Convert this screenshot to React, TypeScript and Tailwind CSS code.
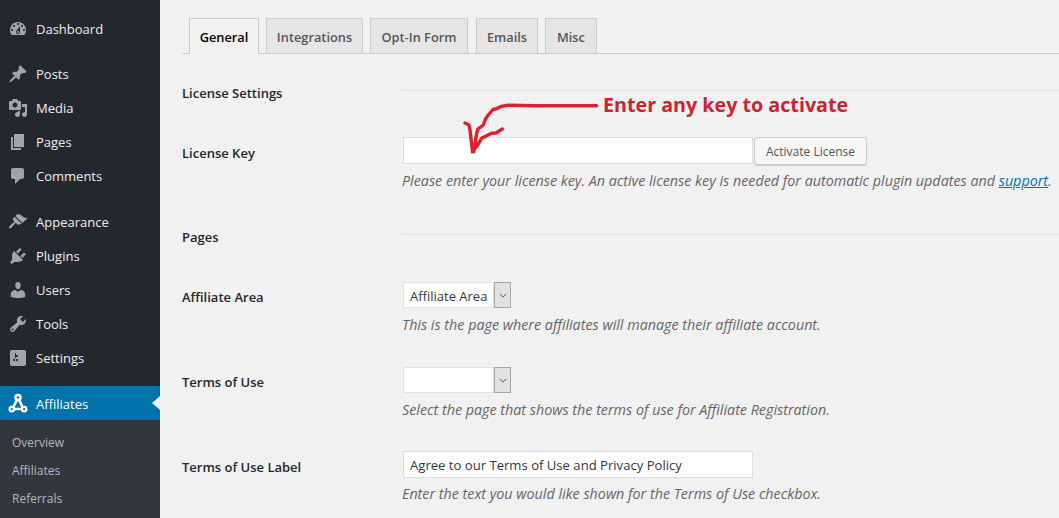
import React from 'react';

const ICONS: Record<string, string> = {
  dashboard: 'M3.76 16h12.48c1.1-1.37 1.76-3.11 1.76-5 0-4.42-3.58-8-8-8s-8 3.58-8 8c0 1.89.66 3.63 1.76 5zM10 4c.55 0 1 .45 1 1s-.45 1-1 1-1-.45-1-1 .45-1 1-1zM6 6c.55 0 1 .45 1 1s-.45 1-1 1-1-.45-1-1 .45-1 1-1zm8 0c.55 0 1 .45 1 1s-.45 1-1 1-1-.45-1-1 .45-1 1-1zm-5.37 5.55L12 7v6c0 1.1-.9 2-2 2s-2-.9-2-2c0-.57.24-1.08.63-1.45zM4 10c.55 0 1 .45 1 1s-.45 1-1 1-1-.45-1-1 .45-1 1-1zm12 0c.55 0 1 .45 1 1s-.45 1-1 1-1-.45-1-1 .45-1 1-1zm-5 3c0-.55-.45-1-1-1s-1 .45-1 1 .45 1 1 1 1-.45 1-1z',
  posts: 'M10.44 3.02l1.82-1.82 6.36 6.35-1.83 1.82c-1.05-.68-2.48-.57-3.41.36l-.75.75c-.92.93-1.04 2.35-.35 3.41l-1.83 1.82-2.41-2.41-2.8 2.79c-.42.42-3.38 2.71-3.8 2.29s1.86-3.39 2.28-3.81l2.79-2.79L4.1 9.36l1.83-1.82c1.05.69 2.48.57 3.4-.36l.75-.75c.93-.92 1.05-2.35.36-3.41z',
  media: 'M13 11V4c0-.55-.45-1-1-1h-1.67L9 1H5L3.67 3H2c-.55 0-1 .45-1 1v7c0 .55.45 1 1 1h10c.55 0 1-.45 1-1zM7 4.5c1.38 0 2.5 1.12 2.5 2.5S8.38 9.5 7 9.5 4.5 8.38 4.5 7 5.62 4.5 7 4.5zM14 6h5v10.5c0 1.38-1.12 2.5-2.5 2.5S14 17.88 14 16.5s1.12-2.5 2.5-2.5c.17 0 .34.02.5.05V9h-3V6zm-4 8.05V13h2v3.5c0 1.38-1.12 2.5-2.5 2.5S7 17.88 7 16.5 8.12 14 9.5 14c.17 0 .34.02.5.05z',
  pages: 'M6 15V2h10v13H6zm-1 1h8v2H3V5h2v11z',
  comments: 'M5 2h9c1.1 0 2 .9 2 2v7c0 1.1-.9 2-2 2h-2l-5 5v-5H5c-1.1 0-2-.9-2-2V4c0-1.1.9-2 2-2z',
  appearance: 'M14.48 11.06L7.41 3.99l1.5-1.5c.5-.56 2.3-.47 3.51.32 1.21.8 1.43 1.28 2.91 2.1 1.18.64 2.45 1.26 4.45.85zm-.71.71L6.7 4.7 4.93 6.47c-.39.39-.39 1.02 0 1.41l1.06 1.06c.39.39.39 1.03 0 1.42-.6.6-1.43 1.11-2.21 1.69-.35.26-.7.53-1.01.84-1.34 1.33-2.37 2.5-1.57 3.3.8.79 1.97-.23 3.3-1.57.31-.31.58-.66.84-1.01.58-.78 1.09-1.61 1.69-2.21.39-.39 1.02-.39 1.41 0l1.06 1.06c.39.39 1.02.39 1.41 0z',
  plugins: 'M13.11 4.36L9.87 7.6 8 5.73l3.24-3.24c.35-.34 1.05-.2 1.56.32.52.51.66 1.21.31 1.55zm-8 1.77l.91-1.12 9.01 9.01-1.19.84c-.71.71-2.63 1.16-3.82 1.16H6.14L4.9 17.26c-.59.59-1.54.59-2.12 0-.59-.58-.59-1.53 0-2.12l1.24-1.24v-3.88c0-1.13.4-3.19 1.09-3.89zm7.26 3.97l3.24-3.24c.34-.35 1.04-.21 1.55.31.52.51.66 1.21.31 1.55l-3.24 3.25z',
  users: 'M10 9.25c-2.27 0-2.73-3.44-2.73-3.44C7 4.02 7.82 2 9.97 2c2.16 0 2.98 2.02 2.71 3.81 0 0-.41 3.44-2.68 3.44zm0 2.57L12.72 10c2.39 0 4.52 2.33 4.52 4.53v2.49s-3.65 1.13-7.24 1.13c-3.65 0-7.24-1.13-7.24-1.13v-2.49c0-2.25 1.94-4.48 4.47-4.48z',
  tools: 'M16.68 9.77c-1.34 1.34-3.3 1.67-4.95.99l-5.41 6.52c-.99.99-2.59.99-3.58 0s-.99-2.59 0-3.57l6.52-5.42c-.68-1.65-.35-3.61.99-4.95 1.28-1.28 3.12-1.62 4.72-1.06l-2.89 2.89 2.82 2.82 2.86-2.87c.53 1.58.18 3.39-1.08 4.65zM3.81 16.21c.4.39 1.04.39 1.43 0 .4-.4.4-1.04 0-1.43-.39-.4-1.03-.4-1.43 0-.39.39-.39 1.03 0 1.43z',
  settings: 'M18 16V4c0-1.1-.9-2-2-2H4c-1.1 0-2 .9-2 2v12c0 1.1.9 2 2 2h12c1.1 0 2-.9 2-2zM8 11h1c.55 0 1 .45 1 1s-.45 1-1 1H8v1.5c0 .28-.22.5-.5.5s-.5-.22-.5-.5V13H6c-.55 0-1-.45-1-1s.45-1 1-1h1V5.5c0-.28.22-.5.5-.5s.5.22.5.5V7h1c.55 0 1 .45 1 1s-.45 1-1 1h-1v5.5c0 .28-.22.5-.5.5s-.5-.22-.5-.5V9z',
};

const MenuIcon: React.FC<{ name: string }> = ({ name }) => (
  <svg viewBox="0 0 20 20" className="w-5 h-5 -mt-px fill-[#a0a5aa]" fillRule="evenodd">
    <path d={ICONS[name]} />
  </svg>
);

const MenuItem: React.FC<{ icon: string; label: string; className?: string }> = ({ icon, label, className }) => (
  <div className={`flex items-center h-[34px] pl-2 ${className ?? ''}`}>
    <MenuIcon name={icon} />
    <span className="ml-2 mt-0.5 text-[#eeeeee]">{label}</span>
  </div>
);

const AffiliatesIcon = () => (
  <svg viewBox="0 0 20 20" className="w-[22px] h-[22px]">
    <path d="M10 5L5 15.5M10 5l5 10.5M5 15.5h10" stroke="#fff" strokeWidth="2.4" fill="none" />
    <circle cx="10" cy="5" r="3.4" fill="#fff" />
    <circle cx="4.4" cy="15.6" r="3" fill="#fff" />
    <circle cx="15.6" cy="15.6" r="3" fill="#fff" />
    <circle cx="4.4" cy="15.6" r="1" fill="#0073aa" />
    <circle cx="15.6" cy="15.6" r="1" fill="#0073aa" />
    <circle cx="10" cy="5" r="1.1" fill="#0073aa" />
  </svg>
);

const Tab: React.FC<{ label: string; active?: boolean; className: string }> = ({ label, active, className }) => (
  <div
    className={`h-[36px] -mb-px pt-1 flex items-center justify-center border border-[#cccccc] text-[12.8px] font-semibold ${className} ${
      active ? 'bg-[#f1f1f1] border-b-[#f1f1f1] text-[#000000]' : 'bg-[#e5e5e5] text-[#555555]'
    }`}
  >
    {label}
  </div>
);

const Section: React.FC<{ label: string; className: string }> = ({ label, className }) => (
  <div className={`grid grid-cols-[221px_1fr] h-5 ${className}`}>
    <div className="font-semibold text-[13px] leading-5 text-[#23282d]">{label}</div>
    <div className="mt-[7px] border-t border-[#e1e1e1]" />
  </div>
);

const Row: React.FC<{ label: string; className: string; labelClass?: string; children: React.ReactNode }> = ({ label, className, labelClass, children }) => (
  <div className={`grid grid-cols-[221px_1fr] ${className}`}>
    <div className={`font-semibold text-[13px] leading-5 text-[#23282d] ${labelClass ?? 'pt-1.5'}`}>{label}</div>
    <div>{children}</div>
  </div>
);

const Help: React.FC<{ className?: string; children: React.ReactNode }> = ({ className, children }) => (
  <p className={`h-[18px] -ml-px leading-[18px] italic text-[14.3px] text-[#666666] whitespace-nowrap ${className ?? 'mt-2'}`}>{children}</p>
);

const Select: React.FC<{ value?: string }> = ({ value }) => (
  <div className="flex w-[108px] h-[26px]">
    <div className="w-[91px] bg-white border border-[#e2e2e2] px-1.5 text-[13px] leading-[26px] whitespace-nowrap text-[#32373c]">{value}</div>
    <div className="w-[17px] flex items-center justify-center bg-[#e1e1e1] border border-[#a6a6a6]">
      <svg viewBox="0 0 10 6" className="w-2 h-[5px]">
        <path d="M1 1l4 4 4-4" fill="none" stroke="#555" strokeWidth="1.2" />
      </svg>
    </div>
  </div>
);

const App: React.FC = () => {
  return (
    <div className="flex h-[518px] overflow-hidden bg-[#f1f1f1] text-[13px] font-['Open_Sans','Noto_Sans',sans-serif]">
      <aside className="w-40 shrink-0 bg-[#23282d] pt-3">
        <MenuItem icon="dashboard" label="Dashboard" />
        <MenuItem icon="posts" label="Posts" className="mt-[11px]" />
        <MenuItem icon="media" label="Media" />
        <MenuItem icon="pages" label="Pages" />
        <MenuItem icon="comments" label="Comments" />
        <MenuItem icon="appearance" label="Appearance" className="mt-3" />
        <MenuItem icon="plugins" label="Plugins" />
        <MenuItem icon="users" label="Users" />
        <MenuItem icon="tools" label="Tools" />
        <MenuItem icon="settings" label="Settings" />
        <div className="relative flex items-center h-[34px] mt-[11px] pl-[7px] bg-[#0073aa] text-white">
          <AffiliatesIcon />
          <span className="ml-[7px] mt-1">Affiliates</span>
          <div className="absolute right-0 top-[10px] border-y-[7px] border-r-[8px] border-y-transparent border-r-[#f1f1f1]" />
        </div>
        <div className="h-full bg-[#32373c] pt-[9px] text-[12px] text-[#b4b9be]">
          <div className="h-7 leading-7 pl-3">Overview</div>
          <div className="h-7 leading-7 pl-3">Affiliates</div>
          <div className="h-7 leading-7 pl-3">Referrals</div>
        </div>
      </aside>
      <main className="relative flex-1 pl-[22px] pt-[18px] text-[#444444]">
        <div className="flex h-[36px] border-b border-[#cccccc] pl-[7px]">
          <Tab label="General" active className="w-[70px]" />
          <Tab label="Integrations" className="w-[97px] ml-[7px]" />
          <Tab label="Opt-In Form" className="w-[98px] ml-[7px]" />
          <Tab label="Emails" className="w-[62px] ml-2" />
          <Tab label="Misc" className="w-[52px] ml-[7px]" />
        </div>

        <Section label="License Settings" className="mt-[29px]" />

        <Row label="License Key" className="mt-[34px]">
          <div className="flex items-start">
            <input className="w-[350px] h-[27px] bg-white border border-[#dddddd]" />
            <button className="ml-px w-[113px] h-[28px] pt-0.5 rounded-[3px] bg-[#f7f7f7] border border-[#cccccc] shadow-[0_1px_0_#cccccc] text-[12px] text-[#555555]">
              Activate License
            </button>
          </div>
          <Help className="mt-[7px] text-[14.2px]">
            Please enter your license key. An active license key is needed for automatic plugin updates and{' '}
            <span className="underline text-[#0073aa]">support</span>.
          </Help>
        </Row>

        <Section label="Pages" className="mt-[37px]" />

        <Row label="Affiliate Area" labelClass="pt-[5px]" className="mt-[35px]">
          <Select value="Affiliate Area" />
          <Help>This is the page where affiliates will manage their affiliate account.</Help>
        </Row>

        <Row label="Terms of Use" labelClass="pt-[5px]" className="mt-[33px]">
          <Select />
          <Help>Select the page that shows the terms of use for Affiliate Registration.</Help>
        </Row>

        <Row label="Terms of Use Label" className="mt-8">
          <input
            readOnly
            value="Agree to our Terms of Use and Privacy Policy"
            className="block w-[350px] h-[27px] bg-white border border-[#dddddd] px-1.5 text-[13.1px] text-[#32373c]"
          />
          <Help className="mt-[7px]">Enter the text you would like shown for the Terms of Use checkbox.</Help>
        </Row>

        <svg viewBox="0 0 140 60" className="absolute left-[300px] top-[100px] w-[140px] h-[60px]">
          <path
            d="M136.7 5.7H75L48.3 5.2 41 6.5 36.7 8.6 33 9.5 28.3 15 25.5 19 23.3 25 18 29 16.7 33 13.8 51.7M5 23L9 25 10 30 12.5 51.7M13.3 50L17 46 21.7 38.3 27 35.5 31.7 33.3 36 33 42.3 29"
            fill="none"
            stroke="#d9232e"
            strokeWidth="3.4"
            strokeLinecap="round"
            strokeLinejoin="round"
          />
        </svg>
        <div className="absolute left-[443px] top-[91px] text-[19.7px] leading-7 font-bold text-[#c9252f] whitespace-nowrap">
          Enter any key to activate
        </div>
      </main>
    </div>
  );
};

export default App;
